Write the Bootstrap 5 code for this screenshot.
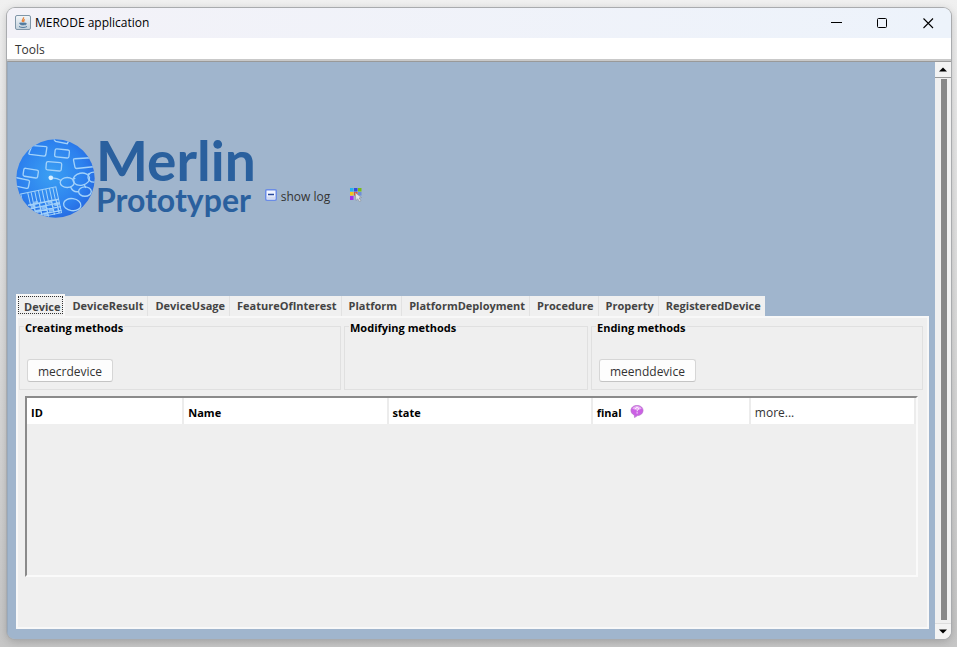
<!DOCTYPE html>
<html lang="en">
<head>
<meta charset="utf-8">
<meta name="viewport" content="width=device-width, initial-scale=1">
<title>MERODE application</title>
<link href="https://cdn.jsdelivr.net/npm/bootstrap@5.3.0/dist/css/bootstrap.min.css" rel="stylesheet">
<style>
body { font-family: "Open Sans", "Noto Sans", sans-serif; font-size: 12px; line-height: 16px; color: #333;
  background: linear-gradient(#f0f0f0, #dcdcdc 50%, #c6c6c6); padding: 8px 6px 8px 7px; }
button, .btn { font: inherit; color: inherit; }
.app-window { border-radius: 8px; box-shadow: 0 0 0 1px #a9abae, 0 2px 10px rgba(0,0,0,.22); }
.title-bar { height: 30px; background: linear-gradient(90deg, #f3f2f8, #edf3fb); color: #000; padding-left: 8px; }
.win-btn { width: 46px; height: 28px; }
.menu-bar { height: 23px; background: #fff; border-bottom: 2px solid #c9c9c9; padding: 2px 0 0 8px; }
.workspace { background: #a0b5cd; border-left: 1px solid #97a9bd; border-top: 1px solid #999; padding: 0 6px 10px 8px; }
.brand-row { height: 232px; }
.brand-name { font-family: Lato, sans-serif; font-weight: 700; color: #2a609e; padding: 2px 0 0 1px; }
.brand-top { font-size: 55px; line-height: 42px; }
.brand-sub { font-size: 32px; line-height: 38px; }
.log-tools { margin: 34px 0 0 9px; }
.tab-strip { border: 0; }
.tab-strip .nav-link { font-size: 11px; font-weight: 700; color: #444; background: #f0f0f0; border: 0; border-right: 1px solid #e2e2e2;
  border-radius: 0; padding: 2px 4px 2px 7px; height: 20px; margin: 0; }
.tab-strip .nav-link.active { color: #444; background: #f0f0f0; border: 2px solid #f8f8f8; border-bottom: 0;
  outline: 1px dotted #333; outline-offset: -3px; height: 22px; padding: 2px 3px 0 6px; }
.tab-strip .last-tab { border-right: 0; }
.tab-page { background: #efefef; border: 2px solid #f8f8f8; padding: 0 4px 50px 1px; }
.method-grid { display: grid; grid-template-columns: 322fr 244fr 332fr; gap: 3px; }
.method-box { border: 1px solid #e0e0e0; height: 72px; padding: 24px 7px 0; }
.method-box legend { float: none; width: auto; margin: 0 0 0 -3px; padding: 3px 1px 0; font-size: 11px; line-height: 14px;
  font-weight: 700; color: #000; }
.method-btn { background: #fdfdfd; border: 1px solid #d6d6d6; border-bottom-color: #c4c4c4; border-radius: 3px;
  height: 23px; padding: 3px 10px 1px; }
.table-pane { border: 2px solid #fafafa; border-top-color: #8a8a8a; border-left-color: #8a8a8a; margin: 6px 5px 0 6px; }
.data-grid { table-layout: fixed; width: 100%; }
.data-grid th { background: #fff; color: #000; font-size: 11px; height: 26px; padding: 4px 4px 0; border-right: 2px solid #ececec; }
.data-grid .more-col { font-size: 12px; font-weight: 400; color: #333; }
.c-id { width: 17.6%; } .c-name, .c-state { width: 23%; } .c-final { width: 17.8%; }
.scroll-bar { width: 16px; background: #f0f0f0; border-top: 1px solid #999; }
.scroll-btn { height: 16px; background: #f3f3f3; border: 0; border-bottom: 1px solid #999; }
.scroll-btn-down { border-bottom: 0; border-top: 1px solid #ddd; }
.scroll-thumb { width: 6px; background: #878787; margin: 1px auto 3px 6px; }
</style>
</head>
<body class="vh-100 overflow-hidden">
<div class="app-window d-flex flex-column h-100 overflow-hidden">
  <header class="title-bar d-flex align-items-center flex-shrink-0">
    <svg width="16" height="16" viewBox="0 0 16 16" aria-hidden="true">
      <defs><linearGradient id="ic" x2="0" y2="1"><stop stop-color="#f4f7fa"/><stop offset="1" stop-color="#c2d0dc"/></linearGradient></defs>
      <rect x=".5" y=".5" width="15" height="14" rx="1.5" fill="url(#ic)" stroke="#8096a8"/>
      <path d="M8.5 2.2c.8 1.8-2.2 2.4-1 4.8M10 4.6c-1.6.6-1.8 1.5-.9 2.6" fill="none" stroke="#e8833a" stroke-width="1.3"/>
      <path d="M4.6 8h5.6v1.200c0 1-4.6 1-5 0zM10 8.300c1.800-.4 1.800 1 .2 1.600" fill="#537b9f" stroke="#537b9f" stroke-width=".8"/>
      <path d="M4 11.500c2 1.300 6 1.300 8 0" fill="none" stroke="#537b9f"/>
    </svg>
    <span class="ms-1">MERODE application</span>
    <div class="d-flex ms-auto">
      <button class="win-btn btn p-0 border-0 d-flex align-items-center justify-content-center" aria-label="Minimize"><svg width="11" height="11"><path d="M0 4.5h11" stroke="#000"/></svg></button>
      <button class="win-btn btn p-0 border-0 d-flex align-items-center justify-content-center" aria-label="Maximize"><svg width="11" height="11"><rect x=".5" y=".5" width="9" height="9" rx="1" fill="none" stroke="#000"/></svg></button>
      <button class="win-btn btn p-0 border-0 d-flex align-items-center justify-content-center" aria-label="Close"><svg width="11" height="11"><path d="M.5 .5l9.500 9.500M10 .5l-9.500 9.500" stroke="#000" stroke-width="1.1"/></svg></button>
    </div>
  </header>
  <nav class="menu-bar d-flex align-items-center flex-shrink-0"><button class="btn p-0 border-0">Tools</button></nav>
  <div class="d-flex flex-fill overflow-hidden">
    <main class="workspace d-flex flex-column flex-fill">
      <div class="brand-row d-flex align-items-center flex-shrink-0">
        <svg width="79" height="79" viewBox="22 26 236 236" role="img" aria-label="Merlin logo">
          <defs>
            <radialGradient id="gl" cx=".45" cy=".45" r=".6"><stop stop-color="#3ba0f3"/><stop offset=".7" stop-color="#2c80ee"/><stop offset="1" stop-color="#2668e0"/></radialGradient>
            <clipPath id="gc"><circle cx="140" cy="144" r="117"/></clipPath>
          </defs>
          <circle cx="140" cy="144" r="117" fill="url(#gl)"/>
          <g clip-path="url(#gc)" fill="none" stroke="#a3d2fa" stroke-width="4">
            <path d="M66 45l46 4q3 0 2 4l-3 20q-1 4-5 4l-42-5q-5-1-3-5l8-19M135 27l5 6 35 7 5-9"/>
            <rect x="138" y="57" width="43" height="24" rx="5" transform="rotate(6 159 69)"/>
            <rect x="112" y="95" width="46" height="25" rx="5" transform="rotate(5 134 107)"/>
            <rect x="44" y="116" width="44" height="24" rx="5" transform="rotate(9 66 128)"/>
            <rect x="16" y="145" width="45" height="25" rx="5" transform="rotate(12 38 158)"/>
            <path d="M246 82l-49 3q-4 0-3 5l4 20q1 4 5 4l49-5M126 142q18-1 31 8M194 146l5-3M236 132l7-3M185 169q8 18 25 14M226 164l5 8"/>
            <ellipse cx="175" cy="156" rx="21" ry="15"/>
            <ellipse cx="217" cy="146" rx="25" ry="18" transform="rotate(-12 217 146)"/>
            <ellipse cx="254" cy="140" rx="17" ry="15"/>
            <ellipse cx="228" cy="183" rx="19" ry="14"/>
            <ellipse cx="190" cy="222" rx="26" ry="18" transform="rotate(8 190 222)"/>
            <path d="M36 190l105-21 17 77-105 21zM57 186l9 40M67 184l8 38M78 182l8 38M89 180l8 38M100 178l8 38M111 175l8 38M122 173l8 38M132 171l8 38" stroke-width="3"/>
            <path d="M58 224l92-18M60 235l93-18M62 246l94-18M65 257l93-18M75 223l9 40M92 219l9 42M110 216l9 42M128 212l9 40M142 209l9 38" stroke-width="4"/>
            <path d="M66 228l14-3M98 232l14-3M82 243l14-3M116 216l12-3M120 239l14-3M136 222l14-3M104 251l14-3M76 218l12-3" stroke-width="10" opacity=".75"/>
          </g>
          <circle cx="126" cy="142" r="7" fill="#d8efff"/>
        </svg>
        <div class="brand-name"><div class="brand-top">Merlin</div><div class="brand-sub">Prototyper</div></div>
        <div class="log-tools d-flex align-items-center">
          <button class="btn p-0 border-0 d-flex align-items-center">
            <svg width="12" height="12" aria-hidden="true"><rect x=".75" y=".75" width="10.500" height="10.500" rx="1" fill="#f1f5ff" stroke="#6a8ce6" stroke-width="1.500"/><path d="M2 7.500h8v3H2z" fill="#d3dcf3"/><path d="M3 5.500h6" stroke="#27489a" stroke-width="1.600"/></svg>
            <span class="ms-1 pt-1">show log</span>
          </button>
          <button class="btn p-0 border-0 d-flex ms-3" aria-label="Options">
            <svg class="ms-1" width="13" height="14" aria-hidden="true"><path d="M0 0h3.500v3.500H0z" fill="#25b3f0"/><path d="M4 0h3.500v3.500H4z" fill="#354bd8"/><path d="M8 0h3.500v3.500H8z" fill="#79bd12"/><path d="M0 4h3.500v3.500H0z" fill="#f4c51c"/><path d="M4 4h3.500v3.500H4z" fill="#e65035"/><path d="M8 4h3.500v3.500H8z" fill="#6d8ed8"/><path d="M0 8h3.500v4H0z" fill="#a42cf0"/><path d="M5 4.500l6.500 5-2.500.5 2 2.700-1.500 1-1.800-2.800-1.700 1.600z" fill="#e2e4e6" stroke="#858b92" stroke-width=".6"/></svg>
          </button>
        </div>
      </div>
      <div class="tab-strip nav nav-tabs align-items-end flex-nowrap flex-shrink-0" role="tablist">
        <button class="nav-link active" role="tab" aria-selected="true">Device</button>
        <button class="nav-link" role="tab">DeviceResult</button>
        <button class="nav-link" role="tab">DeviceUsage</button>
        <button class="nav-link" role="tab">FeatureOfInterest</button>
        <button class="nav-link" role="tab">Platform</button>
        <button class="nav-link" role="tab">PlatformDeployment</button>
        <button class="nav-link" role="tab">Procedure</button>
        <button class="nav-link" role="tab">Property</button>
        <button class="nav-link last-tab" role="tab">RegisteredDevice</button>
      </div>
      <section class="tab-page d-flex flex-column flex-fill" role="tabpanel">
        <div class="method-grid">
          <fieldset class="method-box"><legend>Creating methods</legend><button class="method-btn">mecrdevice</button></fieldset>
          <fieldset class="method-box"><legend>Modifying methods</legend></fieldset>
          <fieldset class="method-box"><legend>Ending methods</legend><button class="method-btn">meenddevice</button></fieldset>
        </div>
        <div class="table-pane flex-fill">
          <table class="data-grid">
            <thead><tr>
              <th class="c-id">ID</th><th class="c-name">Name</th><th class="c-state">state</th>
              <th class="c-final"><div class="d-flex gap-2">final
                <svg width="14" height="13" viewBox="0 0 13 13" aria-hidden="true"><path d="M6.500 .4c8 0 8 9.800.5 10.200L4 12.600l-.2-2.600C-1.500 8-.5.4 6.500.4z" fill="#cb60e4" stroke="#b877cc" stroke-width=".7"/><path d="M1.800 3.600c2-3.400 7.400-3.400 9.400 0-2 1.700-7.400 1.700-9.400 0z" fill="#e9b0f4"/><path d="M5 3.900c.2-2 3.300-1.800 3 0-.2 1.100-1.400 1-1.400 2.400M6.600 7.300v1.200" fill="none" stroke="#fff"/></svg></div></th>
              <th class="more-col">more...</th>
            </tr></thead>
          </table>
        </div>
      </section>
    </main>
    <div class="scroll-bar d-flex flex-column flex-shrink-0">
      <button class="scroll-btn p-0 d-flex align-items-center justify-content-center" aria-label="Scroll up"><svg width="8" height="5"><path d="M0 4.500L4 .5l4 4z"/></svg></button>
      <div class="scroll-thumb flex-fill"></div>
      <button class="scroll-btn scroll-btn-down p-0 d-flex align-items-center justify-content-center" aria-label="Scroll down"><svg width="8" height="5"><path d="M0 .5l4 4 4-4z"/></svg></button>
    </div>
  </div>
</div>
<script src="https://cdn.jsdelivr.net/npm/bootstrap@5.3.0/dist/js/bootstrap.bundle.min.js"></script>
</body>
</html>
